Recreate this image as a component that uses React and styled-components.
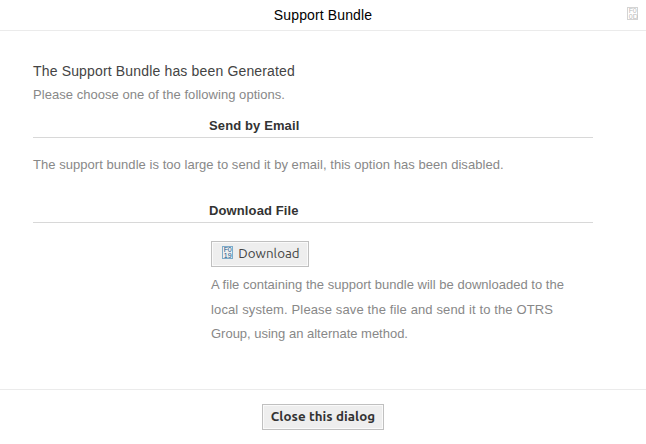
import React from "react";
import styled, { createGlobalStyle } from "styled-components";

const GlobalStyle = createGlobalStyle`
  * { box-sizing: border-box; }
  body { margin: 0; background: #fff; font-family: "Liberation Sans", Arial, sans-serif; }
  h1, h2, h3, p { margin: 0; }
`;

const Dialog = styled.main`
  display: flex;
  flex-direction: column;
  width: 646px;
  height: 444px;
  background: #fff;
  overflow: hidden;
`;

const Header = styled.header`
  display: grid;
  grid-template-columns: 1fr auto 1fr;
  height: 31px;
  border-bottom: 1px solid #ebebeb;
`;

const Title = styled.h1`
  grid-column: 2;
  font-size: 14px;
  font-weight: 400;
  line-height: 30px;
  letter-spacing: 0.13px;
  color: #000;
`;

const CloseButton = styled.button`
  justify-self: end;
  align-self: start;
  display: flex;
  margin: 7px 8px 0 0;
  padding: 0;
  border: 0;
  background: none;
`;

const Content = styled.section`
  flex: 1;
  padding: 30px 53px 0 33px;
`;

const Heading = styled.h2`
  font-size: 14px;
  font-weight: 400;
  line-height: 20px;
  letter-spacing: 0.16px;
  color: #444;
`;

const Text = styled.p`
  padding: ${(p) => p.$padding || "0"};
  font-size: 13px;
  line-height: ${(p) => p.$leading || "28px"};
  letter-spacing: 0.045px;
  color: #888;
`;

const Line = styled.span`
  display: block;
  letter-spacing: ${(p) => p.$tracking};
  white-space: nowrap;
`;

const SectionTitle = styled.h3`
  height: 24px;
  margin: ${(p) => p.$margin};
  padding-left: 176px;
  border-bottom: 1px solid #d8d8d8;
  font-size: 13px;
  font-weight: 700;
  line-height: 24px;
  letter-spacing: 0.12px;
  color: #333;
`;

const DownloadArea = styled.div`
  margin: 18px 0 0 178px;
`;

const Button = styled.button`
  display: flex;
  justify-content: center;
  gap: 5px;
  width: ${(p) => p.$width};
  height: 26px;
  padding: ${(p) => p.$padding || "0"};
  border: 1px solid #c0c0c0;
  box-shadow: inset 0 0 0 1px #fafafa;
  background: #eee;
  color: ${(p) => (p.$bold ? "#333" : "#444")};
  font-family: Ubuntu, "Noto Sans", sans-serif;
  font-size: 13.33px;
  font-weight: ${(p) => (p.$bold ? 700 : 400)};
  letter-spacing: ${(p) => p.$tracking || "0"};
  line-height: 23px;
  white-space: nowrap;
`;

const Footer = styled.footer`
  display: flex;
  justify-content: center;
  height: 55px;
  padding-top: 14px;
  border-top: 1px solid #ebebeb;
`;

const Glyph = styled.svg`
  display: block;
  flex: none;
  margin-top: ${(p) => p.$top || "0"};
  color: ${(p) => p.$color};
  text {
    font: ${(p) => p.$weight || 400} 7px "Liberation Sans", sans-serif;
    letter-spacing: 0;
    fill: currentColor;
  }
`;

function CodeIcon({ top, bottom, color, frame, weight, offset }) {
  return (
    <Glyph width="11" height="13" viewBox="0 0 11 13" $color={color} $weight={weight} $top={offset}>
      <rect x="0.5" y="0.5" width="10" height="12" fill="none" stroke={frame} />
      {[top, bottom].map((pair, row) => (
        <React.Fragment key={row}>
          <text x="1.7" y={6 + row * 6}>{pair[0]}</text>
          <text x="5.7" y={6 + row * 6}>{pair[1]}</text>
        </React.Fragment>
      ))}
    </Glyph>
  );
}

export default function App() {
  return (
    <>
      <GlobalStyle />
      <Dialog>
        <Header>
          <Title>Support Bundle</Title>
          <CloseButton aria-label="Close">
            <CodeIcon top="F0" bottom="0D" color="#bbb" frame="#d4d4d4" />
          </CloseButton>
        </Header>
        <Content>
          <Heading>The Support Bundle has been Generated</Heading>
          <Text>Please choose one of the following options.</Text>
          <SectionTitle $margin="5px 0 0">Send by Email</SectionTitle>
          <Text $leading="54px">
            The support bundle is too large to send it by email, this option has been disabled.
          </Text>
          <SectionTitle $margin="7px 0 0">Download File</SectionTitle>
          <DownloadArea>
            <Button $width="98px" $tracking="0.04px" $padding="0 0 0 2px">
              <CodeIcon top="F0" bottom="19" color="#14588c" frame="#7fabc9" offset="4px" />
              Download
            </Button>
            <Text $leading="24.5px" $padding="6px 0 0">
              <Line $tracking="0.015px">A file containing the support bundle will be downloaded to the</Line>
              <Line $tracking="0.13px">local system. Please save the file and send it to the OTRS</Line>
              <Line $tracking="-0.01px">Group, using an alternate method.</Line>
            </Text>
          </DownloadArea>
        </Content>
        <Footer>
          <Button $width="122px" $bold $tracking="0.07px">Close this dialog</Button>
        </Footer>
      </Dialog>
    </>
  );
}
